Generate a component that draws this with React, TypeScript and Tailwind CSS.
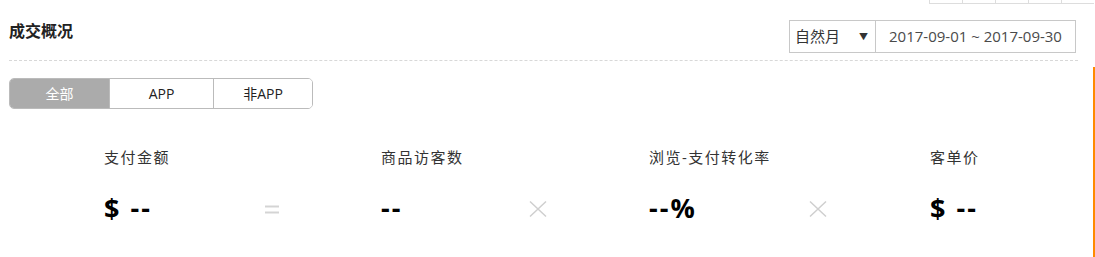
const metrics = [
  { label: "支付金额", value: "$ --", width: "w-[158px]", ml: "" },
  { label: "商品访客数", value: "--", width: "w-[147px]", ml: "ml-[99px]" },
  { label: "浏览-支付转化率", value: "--%", width: "w-[159px]", ml: "ml-[101px]" },
  { label: "客单价", value: "$ --", width: "w-[150px]", ml: "ml-[102px]" },
];

function EqualsIcon() {
  return (
    <svg width="20" height="32" viewBox="0 0 20 32">
      <line x1="3" y1="14.5" x2="17" y2="14.5" stroke="#d4d4d4" strokeWidth="2" />
      <line x1="3" y1="20.5" x2="17" y2="20.5" stroke="#d4d4d4" strokeWidth="2" />
    </svg>
  );
}

function TimesIcon() {
  return (
    <svg width="20" height="32" viewBox="0 0 20 32">
      <path d="M2 9.5 L18 24.5 M18 9.5 L2 24.5" stroke="#cfcfcf" strokeWidth="1.5" />
    </svg>
  );
}

export default function App() {
  return (
    <div className="relative h-[257px] w-[1095px] overflow-hidden bg-white font-['Open_Sans','Noto_Sans_CJK_SC',sans-serif] text-[#333]">
      {/* tail of the table above */}
      <div className="ml-[929px] flex h-[4px]">
        {[0, 1, 2, 3, 4].map((i) => (
          <div key={i} className="h-[4px] w-[33px] border-b border-l border-[#ddd]" />
        ))}
      </div>

      {/* orange marker on the right edge */}
      <div className="absolute top-[67px] right-0 h-[190px] w-[2px] bg-[#ff8a00]" />

      {/* header */}
      <div className="mx-[9px] flex w-[1069px] items-start justify-between border-b border-dashed border-[#d8d8d8] pt-[16px] pb-[7px]">
        <h2 className="text-[16px] leading-[22px] font-bold text-[#222]">成交概况</h2>
        <div className="mr-[2px] flex h-[33px] w-[287px] border border-[#c8c8c8] text-[15px] leading-none">
          <div className="flex w-[86px] items-center justify-between border-r border-[#c8c8c8] pr-[7px] pl-[5px] text-[#333]">
            <span>自然月</span>
            <span className="text-[9px] text-[#333]">▼</span>
          </div>
          <div className="flex flex-1 items-center justify-center text-[#4a4a4a]">
            2017-09-01 ~ 2017-09-30
          </div>
        </div>
      </div>

      {/* segment tabs */}
      <div className="mt-[17px] ml-[9px] flex h-[31px] w-[304px] overflow-hidden rounded-[5px] border border-[#bbb] text-[14px]">
        <button className="w-[99px] bg-[#ababab] text-white">全部</button>
        <button className="w-[104px] border-l border-[#bbb] bg-white text-[#222]">APP</button>
        <button className="flex-1 border-l border-[#bbb] bg-white text-[#222]">非APP</button>
      </div>

      {/* metrics */}
      <div className="mt-[37px] flex pl-[104px]">
        {metrics.map((m, i) => (
          <div key={m.label} className="flex">
            <div className={`${m.width} ${m.ml}`}>
              <div className="text-[15px] leading-[22px] tracking-[1.5px] text-[#333]">{m.label}</div>
              <div className="mt-[24px] text-[27px] leading-[32px] font-bold tracking-[2px] text-black">
                {m.value}
              </div>
            </div>
            {i < metrics.length - 1 && (
              <div className="mt-[46px] flex h-[32px] w-[20px] items-center justify-center">
                {i === 0 ? <EqualsIcon /> : <TimesIcon />}
              </div>
            )}
          </div>
        ))}
      </div>
    </div>
  );
}
